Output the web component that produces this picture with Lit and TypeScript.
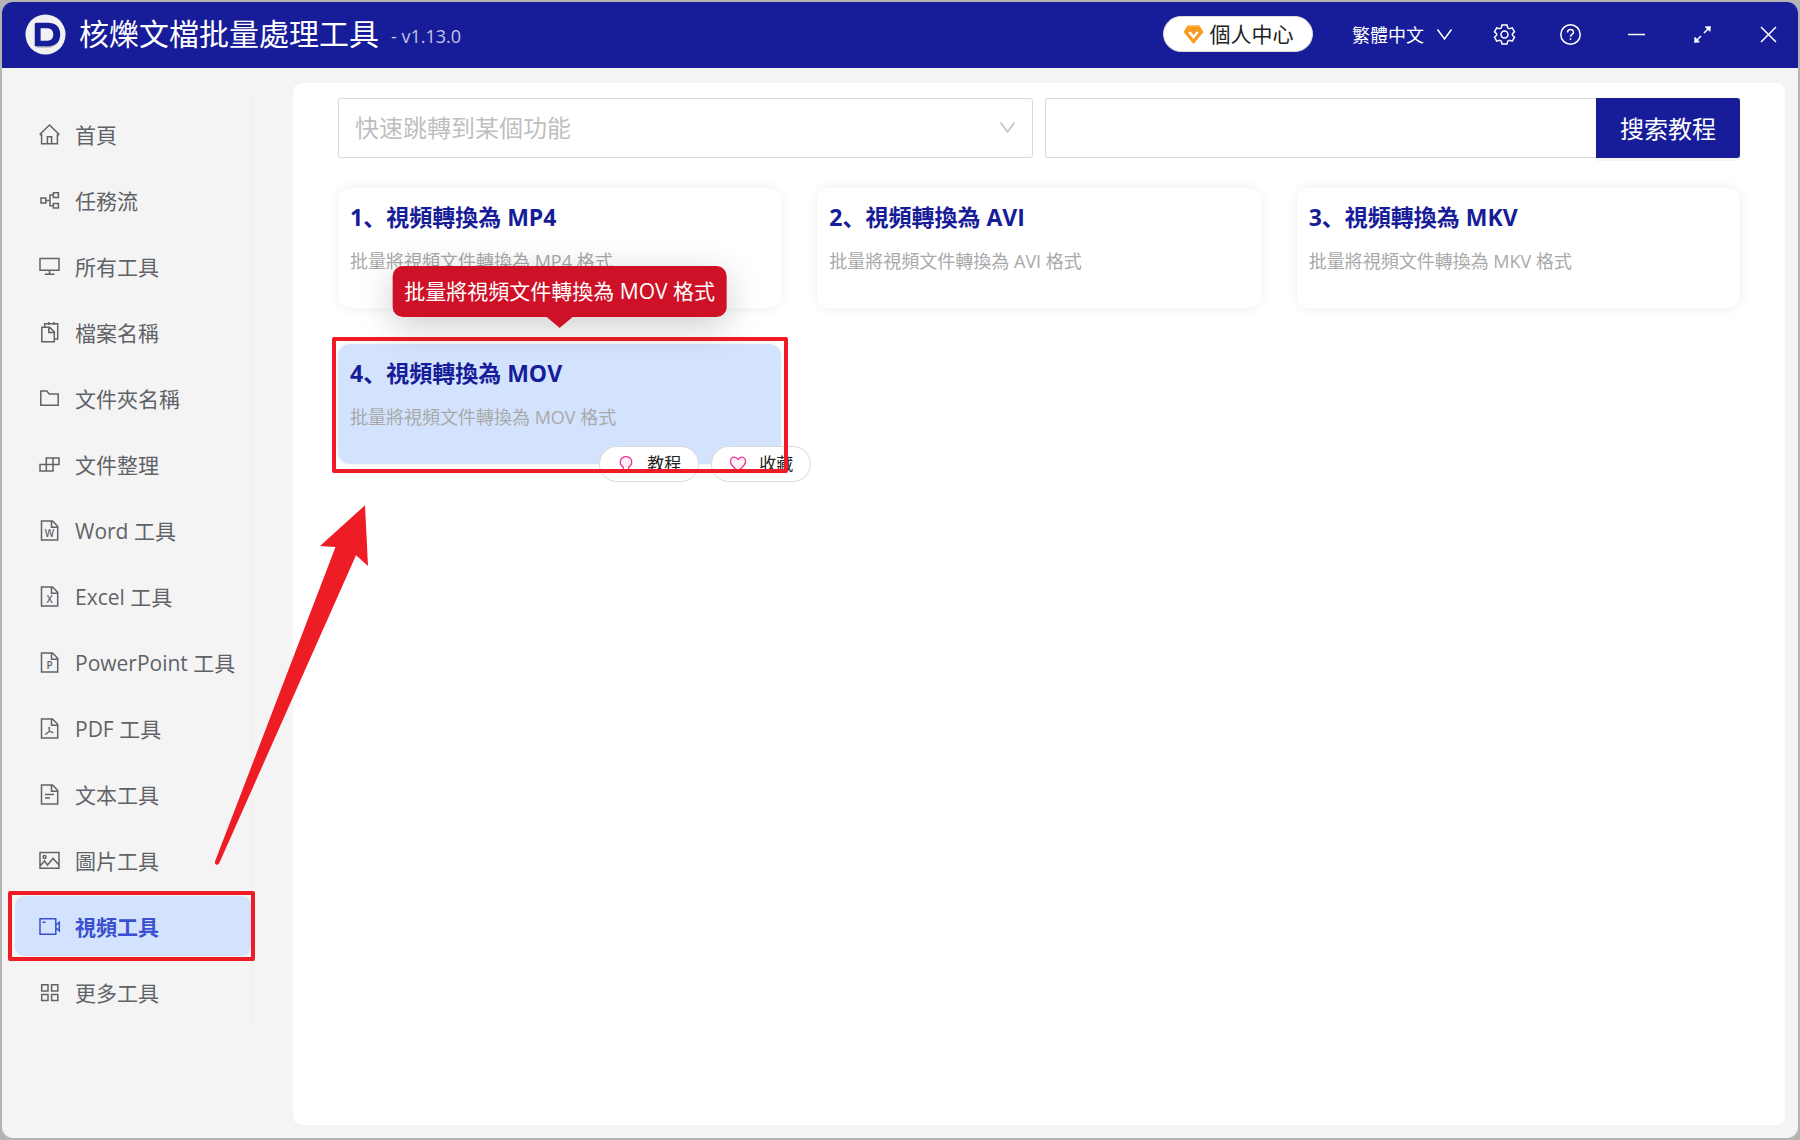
import { LitElement, html, css, svg, nothing, type TemplateResult, type SVGTemplateResult } from "lit";
import { customElement, property, state } from "lit/decorators.js";
import { classMap } from "lit/directives/class-map.js";

const page = svg`<path d="M2.5 1h11L18.700 6.200V20H2.500zM12.500 1v6.200h6.200" />`;

const icons: Record<string, SVGTemplateResult> = {
  home: svg`<path d="M.7 10.500 10.500 1l9.800 9.500M.7 10.700h1.900V19.700h15.800V10.700h1.900M8.400 19.500v-6.700h4.200v6.700" />`,
  flow: svg`<path d="M2 8h4.800v4.900H2zM14.400 2.800h5v4.600h-5zM14.400 13.500h5v4.600h-5zM7 10.500h4M14.400 5H11v10.800h3.400" />`,
  monitor: svg`<path d="M1 2.600h19v11.600H1zM10.500 14.200v4M5.700 18.200h9.700" />`,
  files: svg`<path d="M2.800 5.300h7.900l4.600 4.600v9.800H2.800zM9.800 5.300v5.200h5.500M5.700 5V1.700h13V17h-3.200M9.700 0v3M15 0v3" />`,
  folder: svg`<path d="M1.800 3h6l2.400 3h9v11.200H1.800z" />`,
  arrange: svg`<path d="M7.300 4H20v6.500H7.300zM1 10.500h13V17H1zM14 4v6.500M7.300 10.500V17" />`,
  word: svg`${page}<text x="10.500" y="16.500">W</text>`,
  excel: svg`${page}<text x="10.500" y="16.500">X</text>`,
  ppt: svg`${page}<text x="10.500" y="16.500">P</text>`,
  pdf: svg`${page}<path class="fine" d="M10 9c1.400 0 .8 2.500.2 3.900-1 2.200-2.700 4-3.600 3.700-1-.7 1.400-2.300 3.300-2.700 1.900-.4 4.400-.3 4.400.6 0 .9-2.700 0-3.700-1.500-.8-1.300-1.300-4-.6-4z" />`,
  text: svg`${page}<path d="M6 10.500h9M6 14h5" />`,
  image: svg`<path d="M1 2.600h19v15.600H1zM1.500 15.500l4-4.500 3 4 5.500-6.500 6 6.500" /><circle cx="5.500" cy="7" r="1.500" />`,
  video: svg`<path d="M1 2.700h15.800v15.600H1zM3.500 6.300h3M16.800 9.300l3.500-3v8.500l-3.500-3" />`,
  more: svg`<path d="M2.700 2.700H9v6.200H2.700zM12.600 2.700h6.200v6.200h-6.200zM2.700 12.400H9v6.200H2.700zM12.600 12.400h6.200v6.200h-6.200z" />`,
  down: svg`<path d="M3.500 5.500 10.500 15 17.500 5.500" />`,
  gear: svg`<path d="M8 .9h5l.7 2.900 1.700 1 2.900-.9 2.200 3.900-2.100 2v1.400l2.100 2-2.200 3.900-2.900-.9-1.700 1-.7 2.900H8l-.7-2.900-1.700-1-2.900.9L.5 13.200l2.100-2V9.800L.5 7.800l2.200-3.900 2.900.9 1.700-1z" /><circle cx="10.500" cy="10.500" r="3.500" />`,
  help: svg`<circle cx="10.500" cy="10.500" r="9.700" /><path d="M7.500 8.500c0-4 6-4 6-.3 0 2.300-3 2.200-3 4.600M10.500 14.300v1.800" />`,
  minus: svg`<path d="M2 10.500h17" />`,
  expand: svg`<path d="M12 9l5.500-5.500M9 12l-5.500 5.500" /><path class="solid" d="M13 2.800 18.500 2.500l-.4 5zM2.800 13 2.500 18.500l5-.4z" />`,
  close: svg`<path d="M3 3l15 15M18 3 3 18" />`,
  bulb: svg`<path class="tint" d="M7.300 17v-3C1.500 10.500 3.500 1.800 10.500 1.800S19.500 10.500 13.700 14v3zM8 19.800h5" />`,
  heart: svg`<path class="tint" d="M10.500 18.500C-3 9.500 2 2.500 6 2.500c2.200 0 3.500 1 4.500 2.700 1-1.700 2.300-2.700 4.500-2.700 4 0 9 7-4.500 16z" />`,
};

@customElement("ui-icon")
export class UiIcon extends LitElement {
  @property() name = "";

  static styles = css`
    :host {
      display: inline-flex;
      width: 21px;
      height: 21px;
      flex: none;
    }
    svg {
      width: 100%;
      height: 100%;
      overflow: visible;
      fill: none;
      stroke: currentColor;
      stroke-width: 1.5;
    }
    text {
      font: 600 10px "Open Sans", sans-serif;
      fill: currentColor;
      stroke: none;
      text-anchor: middle;
    }
    .fine {
      stroke-width: 1;
    }
    .solid {
      fill: currentColor;
      stroke-width: 0.6;
    }
    .tint {
      fill: #fff0f6;
    }
  `;

  render(): TemplateResult {
    return html`<svg viewBox="0 0 21 21" aria-hidden="true">${icons[this.name]}</svg>`;
  }
}

interface Entry {
  icon: string;
  label: string;
}

const entries: Entry[] = [
  { icon: "home", label: "首頁" },
  { icon: "flow", label: "任務流" },
  { icon: "monitor", label: "所有工具" },
  { icon: "files", label: "檔案名稱" },
  { icon: "folder", label: "文件夾名稱" },
  { icon: "arrange", label: "文件整理" },
  { icon: "word", label: "Word 工具" },
  { icon: "excel", label: "Excel 工具" },
  { icon: "ppt", label: "PowerPoint 工具" },
  { icon: "pdf", label: "PDF 工具" },
  { icon: "text", label: "文本工具" },
  { icon: "image", label: "圖片工具" },
  { icon: "video", label: "視頻工具" },
  { icon: "more", label: "更多工具" },
];

const formats = ["MP4", "AVI", "MKV", "MOV"];

@customElement("title-bar")
export class TitleBar extends LitElement {
  static styles = css`
    :host {
      display: block;
    }
    .bar {
      display: flex;
      align-items: center;
      box-sizing: border-box;
      height: 66px;
      padding: 0 0 2px 23px;
      background: #171c98;
      color: #fff;
    }
    .logo {
      width: 41px;
      height: 41px;
      margin-right: 13px;
    }
    .name {
      margin: 0;
      font-size: 30px;
      font-weight: 400;
      line-height: 40px;
    }
    .version {
      margin: 4px auto 0 12px;
      font-size: 18px;
      color: #c5c6e5;
    }
    button {
      display: flex;
      align-items: center;
      justify-content: center;
      border: 0;
      padding: 0;
      background: none;
      color: inherit;
      font: inherit;
      cursor: pointer;
    }
    .member {
      gap: 6px;
      width: 150px;
      height: 36px;
      margin-right: 39px;
      border: 1px solid #d9d9d9;
      border-radius: 18px;
      background: #fff;
      color: #222;
      font-size: 21px;
      line-height: 34px;
    }
    .gem {
      width: 21px;
      height: 21px;
    }
    .language {
      gap: 10px;
      margin-right: 19px;
      font-size: 18px;
    }
    .actions {
      display: flex;
      gap: 6px;
    }
    .action {
      width: 60px;
      height: 60px;
    }
  `;

  render(): TemplateResult {
    return html`
      <header class="bar">
        <svg class="logo" viewBox="0 0 42 42" aria-hidden="true">
          <circle cx="21" cy="21" r="20.500" fill="#f1f1f3" />
          <path d="M12 12h14q9 1 9 10.500T26 34.500H12z" fill="#b4b4bc" />
          <path d="M11 9h13.500Q36 10 36 21T24.500 33H10V10z" fill="#171c98" />
          <path d="M16 14.500h7q6 .5 6 6.500t-6 6.500h-7z" fill="#f1f1f3" />
        </svg>
        <h1 class="name">核爍文檔批量處理工具</h1>
        <span class="version">- v1.13.0</span>
        <button class="member" type="button">
          <svg class="gem" viewBox="0 0 21 21" aria-hidden="true">
            <path d="M5 1h11l4.500 7L10.500 20 .5 8z" fill="#f79a1e" />
            <path d="M5 1h11l1 1.500H4z" fill="#fbbf6d" />
            <path d="M6.300 8l4.200 5 4.200-5" fill="none" stroke="#fff" stroke-width="2.500" />
          </svg>
          <span>個人中心</span>
        </button>
        <button class="language" type="button">
          <span>繁體中文</span>
          <ui-icon name="down"></ui-icon>
        </button>
        <div class="actions">
          ${[
            ["gear", "設置"],
            ["help", "幫助"],
            ["minus", "最小化"],
            ["expand", "最大化"],
            ["close", "關閉"],
          ].map(
            ([icon, label]) => html`
              <button class="action" type="button" aria-label=${label}>
                <ui-icon name=${icon}></ui-icon>
              </button>
            `,
          )}
        </div>
      </header>
    `;
  }
}

@customElement("side-menu")
export class SideMenu extends LitElement {
  @state() private active = 12;

  static styles = css`
    :host {
      display: block;
    }
    .list {
      display: flex;
      flex-direction: column;
      gap: 6px;
      width: 236px;
      margin: 30px 0 0;
      padding: 6px 0 3px 13px;
      border-right: 1px solid #ededed;
      list-style: none;
    }
    .item {
      position: relative;
    }
    .link {
      display: flex;
      align-items: center;
      gap: 15px;
      height: 60px;
      padding: 0 24px;
      border-radius: 9px;
      color: #5f6368;
      font-size: 21px;
      text-decoration: none;
      white-space: nowrap;
    }
    .link.active {
      background: #d3e3fd;
      color: #3a50d0;
      font-weight: 700;
    }
    .frame {
      position: absolute;
      inset: -5px -4px -5px -7px;
      border: 4px solid #ee1c25;
      border-radius: 2px;
      pointer-events: none;
    }
  `;

  render(): TemplateResult {
    return html`
      <nav>
        <ul class="list">
          ${entries.map(
            (entry, index) => html`
              <li class="item">
                <a
                  class=${classMap({ link: true, active: index === this.active })}
                  href="#${entry.icon}"
                  @click=${() => (this.active = index)}
                >
                  <ui-icon name=${entry.icon}></ui-icon>
                  <span>${entry.label}</span>
                </a>
                ${index === this.active ? html`<span class="frame"></span>` : nothing}
              </li>
            `,
          )}
        </ul>
      </nav>
    `;
  }
}

@customElement("tool-card")
export class ToolCard extends LitElement {
  @property({ type: Number }) index = 0;
  @property() format = "";
  @property({ type: Boolean }) hovered = false;

  static styles = css`
    :host {
      display: block;
      min-width: 0;
    }
    .card {
      position: relative;
      box-sizing: border-box;
      height: 120px;
      padding: 11px 12px;
      border-radius: 12px;
      background: #fff;
      box-shadow: 0 0 12px rgba(0, 0, 0, 0.07);
    }
    .card.hovered {
      background: #d3e3fd;
    }
    .title {
      margin: 0 0 12px;
      color: #171c98;
      font-size: 23px;
      font-weight: 700;
      line-height: 36px;
    }
    .summary {
      margin: 0;
      color: #a9a9a9;
      font-size: 18px;
      line-height: 28px;
    }
    .tip {
      position: absolute;
      left: 50%;
      bottom: calc(100% + 27px);
      transform: translateX(-50%);
      padding: 0 12px;
      border-radius: 10px;
      background: #ce1126;
      box-shadow: 0 9px 36px rgba(0, 0, 0, 0.2);
      color: #fff;
      font-size: 21px;
      line-height: 51px;
      white-space: nowrap;
    }
    .arrow {
      position: absolute;
      top: 100%;
      left: 50%;
      width: 26px;
      height: 11px;
      margin-left: -13px;
      background: #ce1126;
      clip-path: polygon(0 0, 100% 0, 54% 92%, 50% 100%, 46% 92%);
    }
    .actions {
      position: absolute;
      right: -30px;
      bottom: -18px;
      display: flex;
      gap: 12px;
    }
    .action {
      display: flex;
      align-items: center;
      justify-content: center;
      gap: 12px;
      width: 100px;
      height: 36px;
      padding: 0;
      border: 1px solid #d9d9d9;
      border-radius: 18px;
      background: #fff;
      color: #222;
      font: inherit;
      font-size: 17px;
      line-height: 34px;
    }
    .action ui-icon {
      width: 18px;
      height: 18px;
      color: #eb2f96;
    }
    .frame {
      position: absolute;
      inset: -7px -7px -9px -6px;
      border: 4px solid #ee1c25;
      border-radius: 2px;
      pointer-events: none;
    }
  `;

  render(): TemplateResult {
    const summary = `批量將視頻文件轉換為 ${this.format} 格式`;
    return html`
      <article class=${classMap({ card: true, hovered: this.hovered })}>
        <h2 class="title">${this.index}、視頻轉換為 ${this.format}</h2>
        <p class="summary">${summary}</p>
        ${this.hovered
          ? html`
              <div class="actions">
                <button class="action" type="button"><ui-icon name="bulb"></ui-icon>教程</button>
                <button class="action" type="button"><ui-icon name="heart"></ui-icon>收藏</button>
              </div>
              <span class="frame"></span>
              <div class="tip" role="tooltip">${summary}<span class="arrow"></span></div>
            `
          : nothing}
      </article>
    `;
  }
}

@customElement("app-root")
export class AppRoot extends LitElement {
  static styles = css`
    :host {
      display: block;
      position: relative;
      box-sizing: border-box;
      min-height: 100vh;
      padding: 2px;
      background: #b4b4b4;
      font-family: "Open Sans", "Noto Sans CJK SC", sans-serif;
    }
    .window {
      display: flex;
      flex-direction: column;
      min-height: calc(100vh - 4px);
      border-radius: 11px;
      background: #f4f4f4;
      overflow: hidden;
    }
    .body {
      display: flex;
      flex: 1;
    }
    side-menu {
      width: 291px;
      flex: none;
    }
    .panel {
      flex: 1;
      min-width: 0;
      margin: 15px 13px 13px 0;
      padding: 15px 45px;
      border-radius: 9px;
      background: #fff;
    }
    .search {
      display: grid;
      grid-template-columns: 1fr 1fr;
      gap: 12px;
      margin-bottom: 30px;
    }
    .jump {
      position: relative;
      display: flex;
    }
    .jump-select,
    .query {
      box-sizing: border-box;
      width: 100%;
      height: 60px;
      border: 1px solid #d9d9d9;
      border-radius: 3px;
      background: #fff;
      font: inherit;
      font-size: 24px;
      outline: none;
    }
    .jump-select {
      appearance: none;
      padding: 0 54px 2px 16px;
      color: #bfbfbf;
    }
    .chevron {
      position: absolute;
      top: 19px;
      right: 15px;
      color: #bfbfbf;
      pointer-events: none;
    }
    .lookup {
      display: flex;
    }
    .query {
      flex: 1;
      min-width: 0;
      padding: 0 16px;
      border-right: 0;
      border-radius: 3px 0 0 3px;
    }
    .submit {
      width: 144px;
      height: 60px;
      flex: none;
      padding: 0 0 2px;
      border: 0;
      border-radius: 0 3px 3px 0;
      background: #171c98;
      box-shadow: 0 3px 0 rgba(0, 0, 0, 0.04);
      color: #fff;
      font: inherit;
      font-size: 24px;
    }
    .cards {
      display: grid;
      grid-template-columns: repeat(3, 1fr);
      gap: 36px;
    }
    .pointer {
      position: absolute;
      left: 212px;
      top: 504px;
      width: 160px;
      height: 362px;
      pointer-events: none;
    }
  `;

  render(): TemplateResult {
    return html`
      <div class="window">
        <title-bar></title-bar>
        <div class="body">
          <side-menu></side-menu>
          <main class="panel">
            <form class="search" @submit=${(event: Event) => event.preventDefault()}>
              <div class="jump">
                <select class="jump-select" aria-label="快速跳轉到某個功能">
                  <option>快速跳轉到某個功能</option>
                  ${formats.map((format) => html`<option>視頻轉換為 ${format}</option>`)}
                </select>
                <ui-icon class="chevron" name="down"></ui-icon>
              </div>
              <div class="lookup">
                <input class="query" type="text" aria-label="搜索教程" />
                <button class="submit" type="submit">搜索教程</button>
              </div>
            </form>
            <section class="cards">
              ${formats.map(
                (format, position) => html`
                  <tool-card
                    .index=${position + 1}
                    .format=${format}
                    .hovered=${position === 3}
                  ></tool-card>
                `,
              )}
            </section>
          </main>
        </div>
      </div>
      <svg class="pointer" viewBox="212 504 160 362" aria-hidden="true">
        <path
          d="M365 505.300 320 546l15.500 1L215 861.500q-.5 3 1.500 3.200t2.800-1.700L356 555.300l12 10.700z"
          fill="#ee1c25"
        />
      </svg>
    `;
  }
}
